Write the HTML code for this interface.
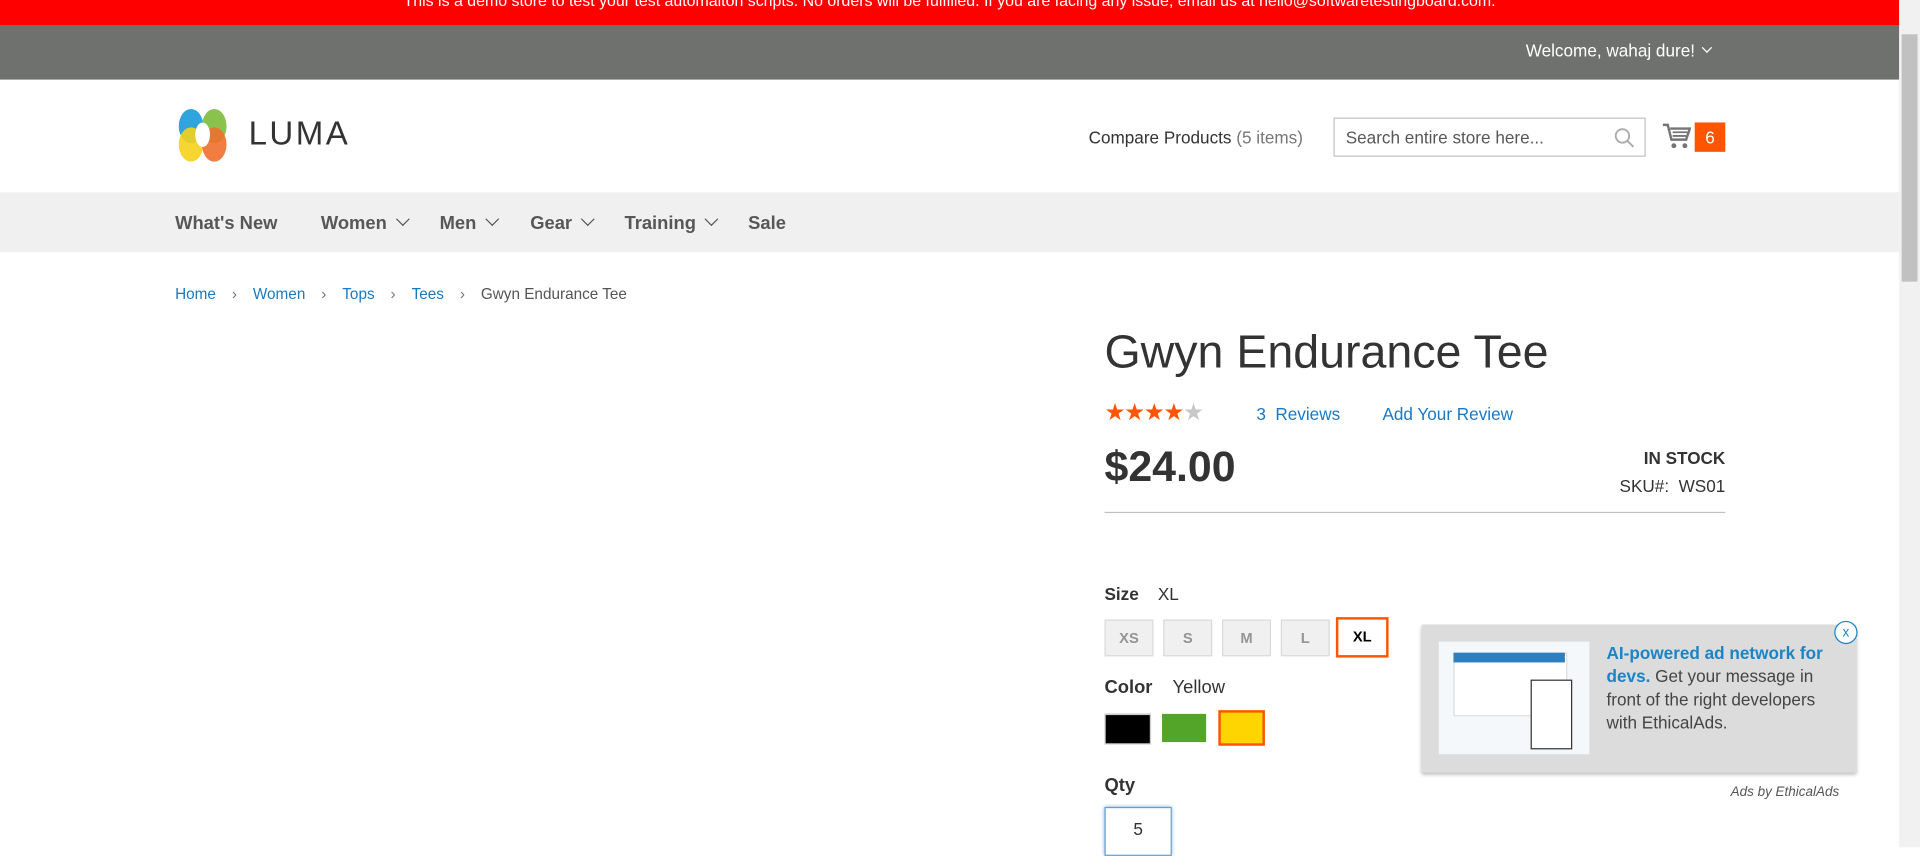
<!DOCTYPE html>
<html><head><meta charset="utf-8"><style>
html,body{margin:0;padding:0;overflow:hidden;width:1920px;height:847px;background:#fff}
#w{position:absolute;left:0;top:0;width:1568px;height:692px;transform:scale(1.22449);transform-origin:0 0;font-family:"Liberation Sans",sans-serif;color:#333}
.a{position:absolute;white-space:nowrap}
.sz{position:absolute;top:506px;height:30px;background:#f0f0f0;border:1px solid #dadada;box-sizing:border-box;font-size:12px;font-weight:bold;color:#949494;text-align:center;line-height:28px}
.chev{display:inline-block;width:7px;height:7px;border-right:1.2px solid #555;border-bottom:1.2px solid #555;transform:rotate(45deg);margin-left:9px;position:relative;top:-4px}
.bc{color:#1979c3}
.sep{color:#777;margin:0 13px}
</style></head><body><div id="w">
<div class="a" style="left:0;top:0;width:1551px;height:21px;background:#f00;color:#fff;font-size:13px;text-align:center;line-height:2px">This is a demo store to test your test automaiton scripts. No orders will be fulfilled. If you are facing any issue, email us at hello@softwaretestingboard.com.</div>
<div class="a" style="left:0;top:21px;width:1551px;height:44px;background:#6e716e"></div>
<div class="a" style="left:1246px;top:33px;color:#fff;font-size:14px">Welcome, wahaj dure! <span class="chev" style="border-color:#fff;width:5px;height:5px;margin-left:3px"></span></div>
<svg class="a" style="left:143px;top:87px" width="46" height="46" viewBox="0 0 46 46"><ellipse cx="13" cy="16" rx="10" ry="14" fill="#1a9ad9" opacity=".9"/><ellipse cx="32" cy="16" rx="10" ry="14" fill="#7cbb3a" opacity=".9"/><ellipse cx="13" cy="31" rx="10" ry="14" fill="#f5d21c" opacity=".9"/><ellipse cx="32" cy="31" rx="10" ry="14" fill="#f06f2f" opacity=".9"/><ellipse cx="22.5" cy="23" rx="6" ry="10" fill="#fff"/></svg>
<div class="a" style="left:203px;top:94px;font-size:27px;letter-spacing:2px;color:#333">LUMA</div>
<div class="a" style="left:889px;top:104px;font-size:14px">Compare Products <span style="color:#777">(5 items)</span></div>
<div class="a" style="left:1089px;top:96px;width:255px;height:32px;border:1px solid #c2c2c2;box-sizing:border-box"></div>
<div class="a" style="left:1099px;top:104px;font-size:14px;color:#575757">Search entire store here...</div>
<svg class="a" style="left:1318px;top:104px" width="17" height="17"><circle cx="7" cy="7" r="5.5" fill="none" stroke="#aaa" stroke-width="1.5"/><path d="M11 11l5 5" stroke="#aaa" stroke-width="1.5"/></svg>
<svg class="a" style="left:1357px;top:99px" width="24" height="24"><path d="M1 3h4l3 12h12l3-9H7" fill="none" stroke="#757575" stroke-width="2"/><path d="M9 9h12M9 12h11" stroke="#757575" stroke-width="1.5"/><circle cx="10" cy="20" r="2" fill="#757575"/><circle cx="19" cy="20" r="2" fill="#757575"/></svg>
<div class="a" style="left:1384px;top:100px;width:25px;height:24px;background:#ff5501;color:#fff;font-size:14px;text-align:center;line-height:24px">6</div>
<div class="a" style="left:0;top:157px;width:1551px;height:49px;background:#f0f0f0"></div>
<div class="a" style="left:143px;top:174px;font-size:15px;font-weight:bold;color:#575757">What's New</div>
<div class="a" style="left:262px;top:174px;font-size:15px;font-weight:bold;color:#575757">Women<span class="chev"></span></div>
<div class="a" style="left:359px;top:174px;font-size:15px;font-weight:bold;color:#575757">Men<span class="chev"></span></div>
<div class="a" style="left:433px;top:174px;font-size:15px;font-weight:bold;color:#575757">Gear<span class="chev"></span></div>
<div class="a" style="left:510px;top:174px;font-size:15px;font-weight:bold;color:#575757">Training<span class="chev"></span></div>
<div class="a" style="left:611px;top:174px;font-size:15px;font-weight:bold;color:#575757">Sale</div>
<div class="a" style="left:143px;top:233px;font-size:12.5px"><span class="bc">Home</span><span class="sep">›</span><span class="bc">Women</span><span class="sep">›</span><span class="bc">Tops</span><span class="sep">›</span><span class="bc">Tees</span><span class="sep">›</span><span style="color:#555">Gwyn Endurance Tee</span></div>
<div class="a" style="left:902px;top:267px;font-size:38px;font-weight:300;color:#333">Gwyn Endurance Tee</div>
<div class="a" style="left:902px;top:326px;font-size:19px;letter-spacing:-1px;color:#ff5501">★★★★<span style="color:#c7c7c7">★</span></div>
<div class="a" style="left:1026px;top:330px;font-size:14px;color:#1979c3">3&nbsp; Reviews</div>
<div class="a" style="left:1129px;top:330px;font-size:14px;color:#1979c3">Add Your Review</div>
<div class="a" style="left:902px;top:362px;font-size:35px;font-weight:bold;color:#333">$24.00</div>
<div class="a" style="left:1300px;top:366px;width:109px;text-align:right;font-size:14px;font-weight:bold">IN STOCK</div>
<div class="a" style="left:1300px;top:389px;width:109px;text-align:right;font-size:14px">SKU#:&nbsp; WS01</div>
<div class="a" style="left:902px;top:418px;width:507px;height:1px;background:#c1c1c1"></div>
<div class="a" style="left:902px;top:477px;font-size:14px"><b>Size</b>&nbsp;&nbsp;&nbsp; <span>XL</span></div>
<div class="sz" style="left:902px;width:40px">XS</div>
<div class="sz" style="left:950px;width:40px">S</div>
<div class="sz" style="left:998px;width:40px">M</div>
<div class="sz" style="left:1046px;width:40px">L</div>
<div class="sz" style="left:1091px;width:43px;top:504px;height:33px;background:#fff;border:2px solid #ff5501;color:#000;line-height:29px">XL</div>
<div class="a" style="left:902px;top:553px;font-size:15px"><b>Color</b>&nbsp;&nbsp;&nbsp; <span>Yellow</span></div>
<div class="a" style="left:902px;top:583px;width:36px;height:23px;background:#000;border:1px solid #ccc"></div>
<div class="a" style="left:949px;top:583px;width:36px;height:23px;background:#53a52a"></div>
<div class="a" style="left:995px;top:580px;width:34px;height:25px;background:#ffd500;border:2px solid #ff5501"></div>
<div class="a" style="left:902px;top:633px;font-size:15px;font-weight:bold">Qty</div>
<div class="a" style="left:902px;top:659px;width:55px;height:40px;border:1px solid #6a9ec7;box-shadow:0 0 3px #68a8e0;box-sizing:border-box;font-size:14px;text-align:center;padding-top:9px">5</div>
<div class="a" style="left:1161px;top:510px;width:355px;height:121px;background:#dcdcdc;box-shadow:0 2px 3px #bbb"></div>
<div class="a" style="left:1175px;top:524px;width:123px;height:92px;background:#f5f8fa"></div>
<div class="a" style="left:1187px;top:533px;width:91px;height:50px;background:#fff;border:1px solid #ddd"></div>
<div class="a" style="left:1187px;top:533px;width:91px;height:8px;background:#2e7fbf"></div>
<div class="a" style="left:1250px;top:555px;width:32px;height:55px;background:#fff;border:1px solid #333"></div>
<div class="a" style="left:1312px;top:524px;font-size:14px;line-height:19px;white-space:normal;width:195px;color:#444"><b style="color:#1a84c6">AI-powered ad network for devs.</b> Get your message in front of the right developers with EthicalAds.</div>
<div class="a" style="left:1498px;top:507px;width:19px;height:19px;border:1px solid #1a84c6;border-radius:50%;background:#fff;color:#1a84c6;font-size:11px;text-align:center;line-height:18px;box-sizing:border-box">x</div>
<div class="a" style="left:1380px;top:641px;width:122px;text-align:right;font-size:11px;font-style:italic;color:#555">Ads by EthicalAds</div>
<div class="a" style="left:1551px;top:0;width:17px;height:692px;background:#f1f1f1"></div>
<div class="a" style="left:1553px;top:28px;width:13px;height:202px;background:#c1c1c1"></div>
</div></body></html>
